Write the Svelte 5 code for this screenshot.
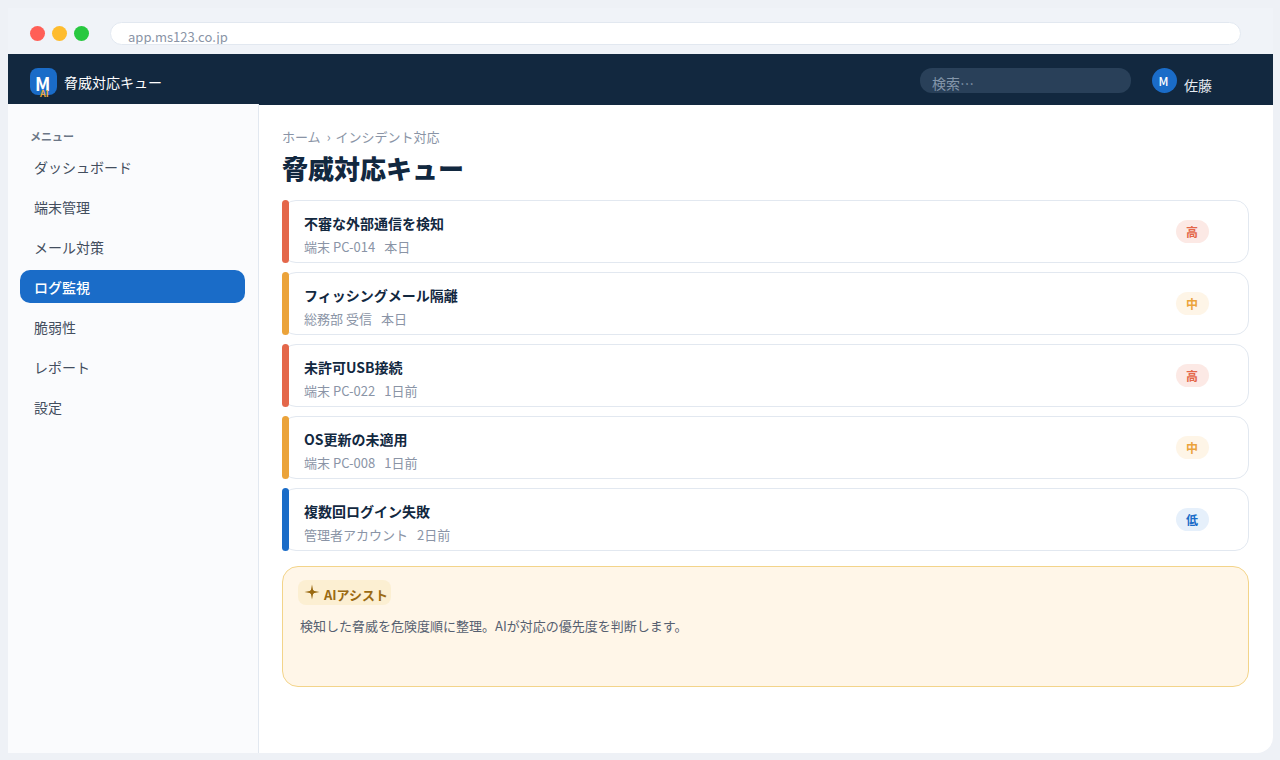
<script>
  const navItems = ['ダッシュボード', '端末管理', 'メール対策', 'ログ監視', '脆弱性', 'レポート', '設定'];
  const activeNav = 'ログ監視';
  const threats = [
    { title: '不審な外部通信を検知', source: '端末 PC-014', when: '本日', level: 'high' },
    { title: 'フィッシングメール隔離', source: '総務部 受信', when: '本日', level: 'mid' },
    { title: '未許可USB接続', source: '端末 PC-022', when: '1日前', level: 'high' },
    { title: 'OS更新の未適用', source: '端末 PC-008', when: '1日前', level: 'mid' },
    { title: '複数回ログイン失敗', source: '管理者アカウント', when: '2日前', level: 'low' }
  ];
  const levelLabels = { high: '高', mid: '中', low: '低' };
</script>

<div class="page">
  <div class="window">
    <div class="chrome">
      <span class="dot red"></span>
      <span class="dot yellow"></span>
      <span class="dot green"></span>
      <div class="address">app.ms123.co.jp</div>
    </div>

    <header class="topbar">
      <div class="logo"><span class="logo__m">M</span><span class="logo__ai">AI</span></div>
      <div class="topbar__title">脅威対応キュー</div>
      <div class="search">検索…</div>
      <div class="avatar">M</div>
      <div class="username">佐藤</div>
    </header>

    <div class="body">
      <aside class="sidebar">
        <div class="sidebar__label">メニュー</div>
        <nav>
          {#each navItems as item}
            <div class="nav-item" class:active={item === activeNav}>{item}</div>
          {/each}
        </nav>
      </aside>

      <main class="content">
        <div class="crumbs">ホーム<span class="crumbs__sep">›</span>インシデント対応</div>
        <h1>脅威対応キュー</h1>

        <div class="queue">
          {#each threats as t}
            <div class="row {t.level}">
              <div class="row__text">
                <div class="row__title">{t.title}</div>
                <div class="row__meta"><span>{t.source}</span><span>{t.when}</span></div>
              </div>
              <span class="badge">{levelLabels[t.level]}</span>
            </div>
          {/each}
        </div>

        <section class="assist">
          <div class="assist__pill">
            <svg viewBox="0 0 16 16" width="16" height="16">
              <path d="M8 0.5 L9.2 6.8 L15.5 8 L9.2 9.2 L8 15.5 L6.8 9.2 L0.5 8 L6.8 6.8 Z" fill="#9a6a12" />
              <circle cx="8" cy="8" r="2.2" fill="#9a6a12" />
            </svg>
            <span>AIアシスト</span>
          </div>
          <p>検知した脅威を危険度順に整理。AIが対応の優先度を判断します。</p>
        </section>
      </main>
    </div>
  </div>
</div>

<style>
  :global(body) {
    margin: 0;
    background: #eef1f6;
    font-family: "Noto Sans CJK JP", "Noto Sans", sans-serif;
  }
  .page {
    height: 760px;
    padding: 8px 7px 7px 8px;
    box-sizing: border-box;
    overflow: hidden;
  }
  .window {
    height: 745px;
    background: #fff;
    border-radius: 0 0 16px 0;
    display: flex;
    flex-direction: column;
    overflow: hidden;
  }

  .chrome {
    height: 46px;
    flex-shrink: 0;
    background: #f0f3f8;
    display: flex;
    align-items: flex-start;
    padding: 14px 32px 0 22px;
    box-sizing: border-box;
  }
  .dot {
    width: 15px;
    height: 15px;
    border-radius: 50%;
    margin-right: 7px;
    margin-top: 4px;
  }
  .red { background: #ff5f57; }
  .yellow { background: #febc2e; }
  .green { background: #28c840; }
  .address {
    flex: 1;
    height: 23px;
    margin-left: 14px;
    box-sizing: border-box;
    background: #fff;
    border: 1px solid #e2e8f0;
    border-radius: 12px;
    padding: 4px 17px 0;
    font-size: 13px;
    line-height: 20px;
    color: #8a94a6;
    overflow: hidden;
  }

  .topbar {
    height: 51px;
    flex-shrink: 0;
    background: #12283f;
    display: flex;
    align-items: flex-start;
    padding: 14px 0 0 22px;
    box-sizing: border-box;
    color: #fff;
  }
  .logo {
    position: relative;
    width: 27px;
    height: 27px;
    border-radius: 8px;
    background: #1a6cc8;
    font-size: 18px;
    font-weight: 700;
    line-height: 31px;
    padding-left: 5px;
    box-sizing: border-box;
  }
  .logo__ai {
    position: absolute;
    left: 10px;
    top: 21px;
    font-size: 9px;
    line-height: 10px;
    font-weight: 700;
    color: #f0a83a;
  }
  .topbar__title {
    margin-left: 7px;
    font-size: 14px;
    line-height: 28px;
  }
  .search {
    margin-left: auto;
    width: 211px;
    height: 25px;
    box-sizing: border-box;
    border-radius: 12px;
    background: #294059;
    padding: 4px 12px 0;
    font-size: 14px;
    line-height: 22px;
    color: #8496aa;
    overflow: hidden;
  }
  .avatar {
    margin-left: 21px;
    width: 25px;
    height: 25px;
    box-sizing: border-box;
    padding-right: 2px;
    border-radius: 50%;
    background: #1a6cc8;
    font-size: 12px;
    font-weight: 500;
    line-height: 25px;
    text-align: center;
  }
  .username {
    margin: 6px 61px 0 7px;
    font-size: 14px;
    line-height: 22px;
    color: #e6ebf1;
  }

  .body {
    flex: 1;
    display: flex;
    min-height: 0;
  }
  .sidebar {
    width: 251px;
    flex-shrink: 0;
    box-sizing: border-box;
    margin-top: -1px;
    background: #fafbfd;
    border-right: 1px solid #e2e8f0;
    padding: 24px 13px 0 12px;
  }
  .sidebar__label {
    padding-left: 10px;
    font-size: 11px;
    font-weight: 700;
    line-height: 16px;
    color: #6b7686;
  }
  nav {
    display: flex;
    flex-direction: column;
    gap: 7px;
    margin-top: 6px;
  }
  .nav-item {
    height: 33px;
    padding-left: 14px;
    border-radius: 10px;
    font-size: 14px;
    line-height: 35px;
    color: #434e5e;
  }
  .nav-item.active {
    background: #1a6cc8;
    color: #fff;
    font-weight: 500;
  }

  .content {
    flex: 1;
    min-width: 0;
    padding: 22px 24px 0 23px;
  }
  .crumbs {
    font-size: 13px;
    line-height: 20px;
    color: #8a94a6;
  }
  .crumbs__sep {
    margin: 0 5px 0 6px;
  }
  h1 {
    margin: 2px 0 13px;
    font-size: 26px;
    line-height: 38px;
    font-weight: 900;
    color: #12283f;
  }
  .queue {
    display: flex;
    flex-direction: column;
    gap: 9px;
  }
  .row {
    position: relative;
    height: 63px;
    box-sizing: border-box;
    border: 1px solid #e2e8f0;
    border-radius: 14px;
    background: #fff;
    padding-left: 21px;
    padding-right: 39px;
    display: flex;
    align-items: center;
    justify-content: space-between;
  }
  .row::before {
    content: '';
    position: absolute;
    left: -1px;
    top: -1px;
    bottom: -1px;
    width: 7px;
    border-radius: 4px;
    background: var(--accent);
  }
  .row.high { --accent: #e4674a; --tint: #fce9e5; }
  .row.mid { --accent: #eba33a; --tint: #fef5e7; }
  .row.low { --accent: #1a6cc8; --tint: #e6f0fb; }
  .row__text {
    padding-top: 4px;
  }
  .row__title {
    font-size: 14px;
    line-height: 24px;
    margin-bottom: 2px;
    font-weight: 700;
    color: #12283f;
  }
  .row__meta {
    display: flex;
    gap: 9px;
    font-size: 13px;
    line-height: 20px;
    color: #8a94a6;
  }
  .badge {
    width: 33px;
    height: 23px;
    padding-right: 1px;
    box-sizing: border-box;
    border-radius: 12px;
    background: var(--tint);
    color: var(--accent);
    font-size: 12px;
    font-weight: 700;
    line-height: 24px;
    text-align: center;
  }

  .assist {
    margin-top: 15px;
    height: 121px;
    box-sizing: border-box;
    background: #fff6e8;
    border: 1px solid #f3d48a;
    border-radius: 16px;
    padding: 13px 15px 0;
  }
  .assist__pill {
    display: inline-flex;
    align-items: flex-start;
    gap: 4px;
    height: 25px;
    padding: 0 3px 0 6px;
    border-radius: 8px;
    background: #fcefd2;
    color: #9a6a12;
    font-size: 13px;
    font-weight: 700;
  }
  .assist__pill svg {
    margin-top: 4px;
  }
  .assist__pill span {
    line-height: 29px;
  }
  .assist p {
    margin: 10px 0 0 2px;
    font-size: 13px;
    line-height: 22px;
    color: #566070;
  }
</style>
